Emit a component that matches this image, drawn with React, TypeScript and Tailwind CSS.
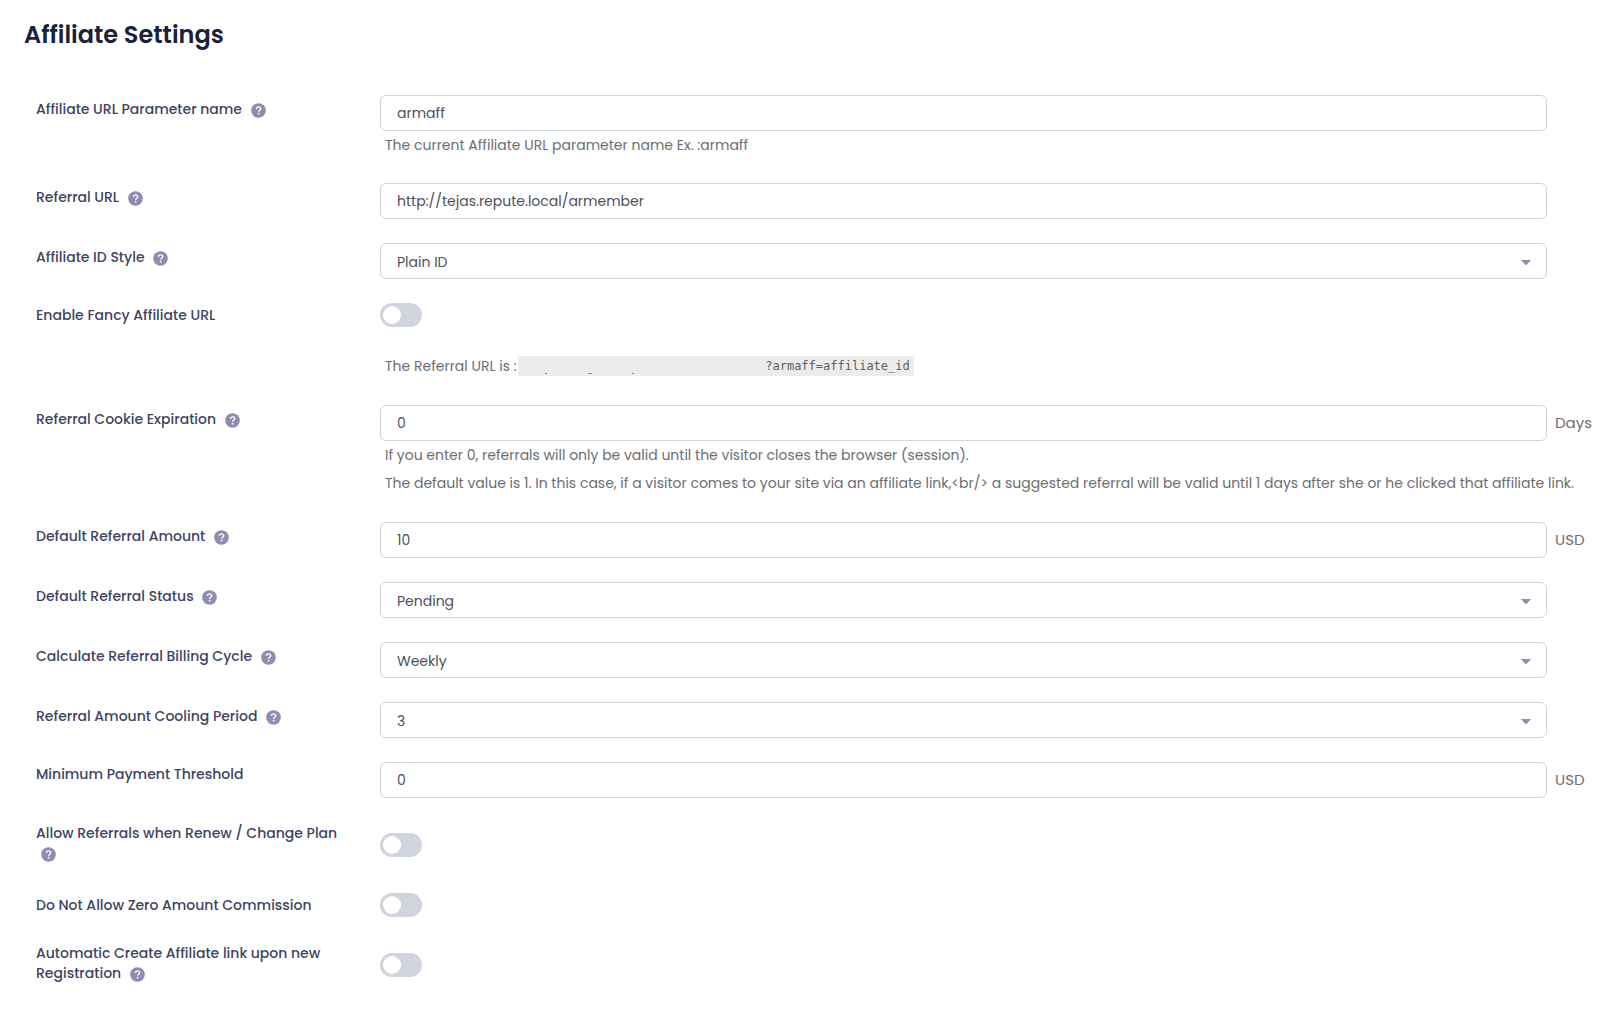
import { useState } from "react";
import type { ReactNode } from "react";

type RowProps = {
  id: string;
  label: string;
  help?: boolean;
  centered?: boolean;
  className?: string;
  children: ReactNode;
};

const inputClass =
  "h-9 w-full rounded-md border border-[#ced2d9] bg-white px-4 text-sm text-[#4e505c] outline-none focus:border-[#005aee]";

function HelpIcon({ label }: { label: string }) {
  return (
    <button type="button" aria-label={`Help: ${label}`} className="ml-[5px] inline-block align-middle">
      <svg viewBox="0 0 15 15" className="block size-[15px]">
        <circle cx="7.5" cy="7.5" r="7.3" fill="#8f8cb0" />
        <path
          d="M5.4 5.9c.1-1.3 1-2 2.2-2 1.2 0 2.1.7 2.1 1.8 0 1.5-2 1.6-2 3"
          fill="none"
          stroke="#fff"
          strokeWidth="1.4"
        />
        <circle cx="7.6" cy="10.7" r=".9" fill="#fff" />
      </svg>
    </button>
  );
}

function Row({ id, label, help, centered, className = "py-3", children }: RowProps) {
  const labelPadding = centered ? (help ? "pb-1" : "") : help ? "pt-1" : "pt-0.5";
  return (
    <div className={`grid grid-cols-[344px_minmax(0,1fr)] ${centered ? "h-15 items-center" : ""} ${className}`}>
      <div className={`pr-7 text-sm leading-5 ${labelPadding}`}>
        <label htmlFor={id} className="font-medium text-[#3e4462]">
          {label}
        </label>{" "}
        {help && <HelpIcon label={label} />}
      </div>
      <div>{children}</div>
    </div>
  );
}

function Field({ suffix, children }: { suffix?: string; children: ReactNode }) {
  return (
    <div className="flex items-center">
      <div className="relative min-w-0 flex-1">{children}</div>
      <span className="w-[72px] shrink-0 pl-2 text-[15px] leading-5 text-[#6c6e72]">{suffix}</span>
    </div>
  );
}

function TextField({ id, value, suffix }: { id: string; value: string; suffix?: string }) {
  return (
    <Field suffix={suffix}>
      <input id={id} type="text" defaultValue={value} className={inputClass} />
    </Field>
  );
}

function SelectField({ id, options }: { id: string; options: string[] }) {
  return (
    <Field>
      <select id={id} className={`${inputClass} appearance-none pt-0.5`}>
        {options.map((o) => (
          <option key={o}>{o}</option>
        ))}
      </select>
      <svg viewBox="0 0 10 5" className="pointer-events-none absolute top-[17px] right-4 h-[5px] w-2.5">
        <path d="M0 0h10L6 4.5q-1 .9-2 0z" fill="#8f8cb0" />
      </svg>
    </Field>
  );
}

function Toggle({ id }: { id: string }) {
  const [on, setOn] = useState(false);
  return (
    <input
      id={id}
      type="checkbox"
      role="switch"
      checked={on}
      onChange={(e) => setOn(e.target.checked)}
      className="block h-6 w-[42px] cursor-pointer appearance-none rounded-full bg-[#d0d4de] p-[3px] transition-colors before:block before:size-[18px] before:rounded-full before:bg-white before:transition-transform checked:bg-[#005aee] checked:before:translate-x-[18px]"
    />
  );
}

function Hint({ children }: { children: ReactNode }) {
  return <p className="pr-4 pl-[5px] text-sm leading-7 text-[#6c6e72]">{children}</p>;
}

export default function App() {
  return (
    <main className="min-h-screen bg-white font-['Poppins','Inter',sans-serif]">
      <h1 className="px-6 pt-[19px] text-2xl leading-8 font-semibold text-[#1a2138]">Affiliate Settings</h1>

      <form className="mt-8 pl-9">
        <Row id="param-name" label="Affiliate URL Parameter name" help>
          <TextField id="param-name" value="armaff" />
          <Hint>The current Affiliate URL parameter name Ex. :armaff</Hint>
        </Row>
        <Row id="referral-url" label="Referral URL" help>
          <TextField id="referral-url" value="http://tejas.repute.local/armember" />
        </Row>
        <Row id="id-style" label="Affiliate ID Style" help>
          <SelectField id="id-style" options={["Plain ID", "MD5 Hash"]} />
        </Row>
        <Row id="fancy-url" label="Enable Fancy Affiliate URL">
          <Toggle id="fancy-url" />
          <div className="mt-[25px] mb-px flex h-7 items-center">
            <Hint>The Referral URL is :</Hint>
            <code className="-ml-[15px] flex h-5 w-[396px] items-center justify-between bg-[#ececec] pr-1 font-['DejaVu_Sans_Mono',monospace] text-xs leading-5 text-[#5c5e62]">
              {/* hidden part of the address */}
              <svg viewBox="0 0 240 20" className="h-5 w-60 shrink-0" fill="#8a8d91">
                <path d="M27 17h2v1h-2zM70 17h4v1h-4zM114 17h2v1h-2z" />
              </svg>
              ?armaff=affiliate_id
            </code>
          </div>
        </Row>
        <Row id="cookie" label="Referral Cookie Expiration" help className="pt-3 pb-[13px]">
          <TextField id="cookie" value="0" suffix="Days" />
          <Hint>If you enter 0, referrals will only be valid until the visitor closes the browser (session).</Hint>
          <Hint>
            {
              "The default value is 1. In this case, if a visitor comes to your site via an affiliate link,<br/> a suggested referral will be valid until 1 days after she or he clicked that affiliate link."
            }
          </Hint>
        </Row>
        <Row id="amount" label="Default Referral Amount" help>
          <TextField id="amount" value="10" suffix="USD" />
        </Row>
        <Row id="status" label="Default Referral Status" help>
          <SelectField id="status" options={["Pending", "Accepted", "Rejected"]} />
        </Row>
        <Row id="billing-cycle" label="Calculate Referral Billing Cycle" help>
          <SelectField id="billing-cycle" options={["Weekly", "Monthly", "Yearly"]} />
        </Row>
        <Row id="cooling" label="Referral Amount Cooling Period" help>
          <SelectField id="cooling" options={["3", "7", "14", "30"]} />
        </Row>
        <Row id="threshold" label="Minimum Payment Threshold" className="pt-3 pb-[17px]">
          <TextField id="threshold" value="0" suffix="USD" />
        </Row>
        <Row id="renew" label="Allow Referrals when Renew / Change Plan" help centered className="">
          <Toggle id="renew" />
        </Row>
        <Row id="zero-amount" label="Do Not Allow Zero Amount Commission" centered className="">
          <Toggle id="zero-amount" />
        </Row>
        <Row id="auto-create" label="Automatic Create Affiliate link upon new Registration" help centered className="">
          <Toggle id="auto-create" />
        </Row>
      </form>
    </main>
  );
}
